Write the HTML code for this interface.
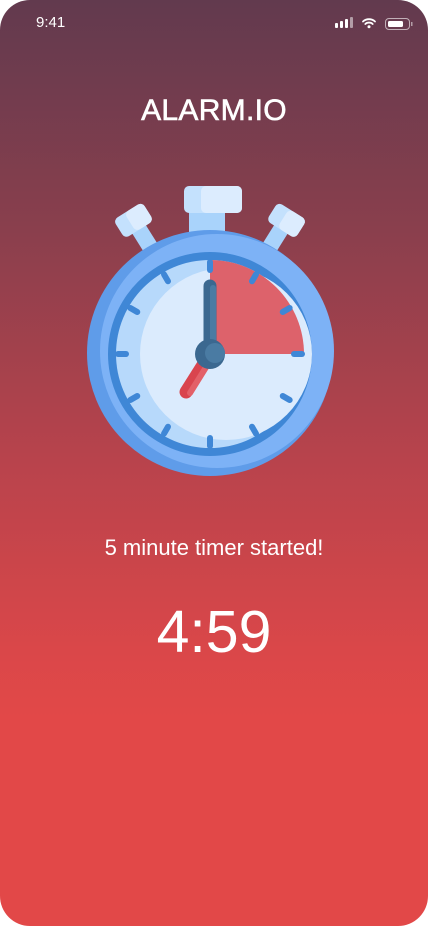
<!DOCTYPE html>
<html><head><meta charset="utf-8"><style>
html,body{margin:0;padding:0;background:#fff;}
.scr{position:relative;width:428px;height:926px;border-radius:30px;overflow:hidden;
background:linear-gradient(180deg,#623a4e 0px,#8a3f4d 230px,#b8434c 460px,#da4749 650px,#e24848 720px,#e24848 926px);
font-family:"Liberation Sans",sans-serif;color:#fff;}
.time{position:absolute;left:36px;top:14px;font-size:15px;}
.t{position:absolute;left:0;width:428px;text-align:center;}
</style></head><body><div class="scr">
<div class="time">9:41</div>
<svg style="position:absolute;left:330px;top:14px" width="90" height="20" viewBox="0 0 90 20">
<rect x="5" y="9" width="3" height="5" rx="1" fill="#fff"/>
<rect x="10" y="7" width="3" height="7" rx="1" fill="#fff"/>
<rect x="15" y="5" width="3" height="9" rx="1" fill="#fff"/>
<rect x="20" y="3" width="3" height="11" rx="1" fill="#fff" opacity=".5"/>
<path d="M33 7.5a9 9 0 0 1 12 0M35.3 10a5.5 5.5 0 0 1 7.4 0" stroke="#fff" stroke-width="1.8" fill="none" stroke-linecap="round"/>
<circle cx="39" cy="12.8" r="1.5" fill="#fff"/>
<rect x="55.5" y="4.5" width="24" height="11" rx="3.5" stroke="#fff" stroke-opacity=".6" fill="none"/>
<rect x="58" y="7" width="15" height="6" rx="1.5" fill="#fff"/>
<rect x="81" y="8" width="1.5" height="4" fill="#fff" opacity=".5"/>
</svg>
<div class="t" style="top:94px;font-size:30px;-webkit-text-stroke:0.6px #fff;letter-spacing:0.3px">ALARM.IO</div>
<svg style="position:absolute;left:0;top:0" width="428" height="500" viewBox="0 0 428 500">
<g transform="rotate(-32 152 250)"><rect x="144" y="215" width="16" height="40" fill="#a9d3fb"/><rect x="135" y="204" width="34" height="22" rx="5" fill="#c4e1fd"/><rect x="148" y="204" width="21" height="22" rx="5" fill="#dcecfe"/></g>
<g transform="rotate(32 268 250)"><rect x="260" y="215" width="16" height="40" fill="#a9d3fb"/><rect x="251" y="204" width="34" height="22" rx="5" fill="#c4e1fd"/><rect x="264" y="204" width="21" height="22" rx="5" fill="#dcecfe"/></g>
<rect x="189" y="208" width="36" height="30" fill="#a9d3fb"/>
<rect x="184" y="186" width="58" height="27" rx="5" fill="#c4e1fd"/>
<rect x="201" y="186" width="41" height="27" rx="5" fill="#dcecfe"/>
<circle cx="210" cy="353" r="123" fill="#5f9ce9"/>
<circle cx="217" cy="351" r="117" fill="#7db2f6"/>
<circle cx="210" cy="354" r="102" fill="#3f87d6"/>
<circle cx="210" cy="354" r="94" fill="#b7d9fb"/>
<circle cx="226" cy="354" r="86" fill="#dbebfd"/>
<path d="M210 354 L210 260 A94 94 0 0 1 304 354 Z" fill="#dd626b"/>
<g stroke="#3f87d6" stroke-width="6" stroke-linecap="round">
<line x1="210" y1="262" x2="210" y2="270"/>
<line x1="210" y1="262" x2="210" y2="270" transform="rotate(30 210 354)"/>
<line x1="210" y1="262" x2="210" y2="270" transform="rotate(60 210 354)"/>
<line x1="210" y1="262" x2="210" y2="270" transform="rotate(90 210 354)"/>
<line x1="210" y1="262" x2="210" y2="270" transform="rotate(120 210 354)"/>
<line x1="210" y1="262" x2="210" y2="270" transform="rotate(150 210 354)"/>
<line x1="210" y1="262" x2="210" y2="270" transform="rotate(180 210 354)"/>
<line x1="210" y1="262" x2="210" y2="270" transform="rotate(210 210 354)"/>
<line x1="210" y1="262" x2="210" y2="270" transform="rotate(240 210 354)"/>
<line x1="210" y1="262" x2="210" y2="270" transform="rotate(270 210 354)"/>
<line x1="210" y1="262" x2="210" y2="270" transform="rotate(300 210 354)"/>
<line x1="210" y1="262" x2="210" y2="270" transform="rotate(330 210 354)"/>
</g>
<line x1="210" y1="354" x2="186" y2="392" stroke="#d9444e" stroke-width="13" stroke-linecap="round"/>
<line x1="213" y1="356" x2="190" y2="393" stroke="#e36068" stroke-width="6" stroke-linecap="round"/>
<line x1="210" y1="354" x2="210" y2="286" stroke="#3b6890" stroke-width="13" stroke-linecap="round"/>
<line x1="213" y1="354" x2="213" y2="288" stroke="#4a7ba3" stroke-width="6" stroke-linecap="round"/>
<circle cx="210" cy="354" r="15" fill="#3b6890"/>
<circle cx="215" cy="353" r="10" fill="#4a7ba3"/>
</svg>
<div class="t" style="top:535px;font-size:22px">5 minute timer started!</div>
<div class="t" style="top:598px;font-size:59px">4:59</div>
</div></body></html>
